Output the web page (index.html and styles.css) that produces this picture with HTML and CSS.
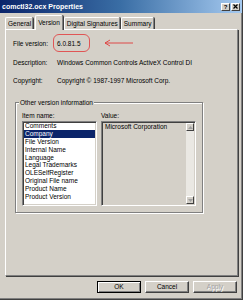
FILE: index.html
```html
<!DOCTYPE html>
<html>
<head>
<meta charset="utf-8">
<link rel="stylesheet" href="styles.css">
</head>
<body>
<div class="window">
  <div class="titlebar">
    <span class="title">comctl32.ocx Properties</span>
    <div class="tbtns">
      <span class="tbtn">?</span>
      <span class="tbtn">
        <svg width="5" height="5" viewBox="0 0 5 5"><path d="M0.5 0.5 L4.5 4.5 M4.5 0.5 L0.5 4.5" stroke="#000" stroke-width="1.2"/></svg>
      </span>
    </div>
  </div>
  <div class="tabs">
    <span class="tab">General</span>
    <span class="tab active">Version</span>
    <span class="tab">Digital Signatures</span>
    <span class="tab">Summary</span>
  </div>
  <div class="panel">
    <div class="info">
      <span class="lbl">File version:</span><span class="val">6.0.81.5</span>
      <span class="lbl">Description:</span><span class="val">Windows Common Controls ActiveX Control DI</span>
      <span class="lbl">Copyright:</span><span class="val">Copyright © 1987-1997 Microsoft Corp.</span>
    </div>
    <div class="mark"></div>
    <svg class="arrow" width="30" height="8" viewBox="0 0 30 8"><path d="M1 4 H29 M1 4 L6 1 M1 4 L6 7" stroke="#e03a3a" stroke-width="0.9" fill="none"/></svg>
    <div class="group">
      <span class="glabel">Other version information</span>
      <div class="gcols">
        <div class="col">
          <span class="clabel">Item name:</span>
          <ul class="list">
            <li>Comments</li>
            <li class="sel">Company</li>
            <li>File Version</li>
            <li>Internal Name</li>
            <li>Language</li>
            <li>Legal Trademarks</li>
            <li>OLESelfRegister</li>
            <li>Original File name</li>
            <li>Product Name</li>
            <li>Product Version</li>
          </ul>
        </div>
        <div class="col">
          <span class="clabel">Value:</span>
          <div class="valuebox">
            <span class="vtext">Microsoft Corporation</span>
            <div class="scroll">
              <span class="sbtn"><svg width="5" height="3" viewBox="0 0 5 3"><path d="M2.5 0 L5 3 H0 Z" fill="#a0a0a0"/></svg></span>
              <span class="sbtn"><svg width="5" height="3" viewBox="0 0 5 3"><path d="M0 0 H5 L2.5 3 Z" fill="#a0a0a0"/></svg></span>
            </div>
          </div>
        </div>
      </div>
    </div>
  </div>
  <div class="buttons">
    <span class="btn default">OK</span>
    <span class="btn">Cancel</span>
    <span class="btn disabled">Apply</span>
  </div>
</div>
</body>
</html>
```
FILE: styles.css
```css
html, body {
  margin: 0;
  padding: 0;
}
body {
  width: 243px;
  height: 300px;
  background: #d4d0c8;
  font-family: "Liberation Sans", Arial, sans-serif;
  font-size: 6.5px;
  color: #000;
  overflow: hidden;
}
.window {
  box-sizing: border-box;
  width: 243px;
  height: 300px;
  border-right: 1px solid #404040;
  border-bottom: 1px solid #404040;
  box-shadow: inset -1px -1px 0 #808080;
  display: flex;
  flex-direction: column;
}
.titlebar {
  height: 13px;
  background: linear-gradient(to right, #0a246a 0%, #3a6ea5 50%, #a6caf0 100%);
  display: flex;
  align-items: center;
  justify-content: space-between;
  padding: 0 2px 0 2px;
}
.title {
  color: #fff;
  font-weight: bold;
  font-size: 7px;
  line-height: 13px;
}
.tbtns {
  display: flex;
  gap: 1px;
}
.tbtn {
  width: 9px;
  height: 8px;
  box-sizing: border-box;
  background: #d4d0c8;
  border-top: 1px solid #fff;
  border-left: 1px solid #fff;
  border-right: 1px solid #404040;
  border-bottom: 1px solid #404040;
  display: flex;
  align-items: center;
  justify-content: center;
  font-weight: bold;
  font-size: 6px;
  line-height: 6px;
}
.tabs {
  display: flex;
  align-items: flex-end;
  padding-left: 5px;
  margin-top: 2px;
  height: 14px;
  position: relative;
  z-index: 2;
}
.tab {
  box-sizing: border-box;
  height: 12px;
  padding: 0 1px 0 2px;
  line-height: 11px;
  border-top: 1px solid #fff;
  border-left: 1px solid #fff;
  border-right: 1px solid #808080;
  border-radius: 2px 2px 0 0;
  box-shadow: 1px 0 0 #404040;
  margin-right: 1px;
  white-space: nowrap;
}
.tab.active {
  height: 15px;
  margin-bottom: -1px;
  margin-left: 1px;
  background: #d4d0c8;
  line-height: 13px;
  padding: 0 2px;
}
.panel {
  box-sizing: border-box;
  margin: 0 5px 0 5px;
  width: 233px;
  height: 247px;
  border-top: 1px solid #fff;
  border-left: 1px solid #fff;
  border-right: 1px solid #808080;
  border-bottom: 1px solid #808080;
  box-shadow: 1px 1px 0 #404040;
  position: relative;
  padding: 10px 7px 0 7px;
}
.info {
  display: grid;
  grid-template-columns: 44px 1fr;
  row-gap: 10.7px;
  line-height: 8px;
}
.mark {
  position: absolute;
  left: 47px;
  top: 4px;
  width: 37px;
  height: 18px;
  border: 1px solid #e05555;
  border-radius: 6px;
  box-sizing: border-box;
}
.arrow {
  position: absolute;
  left: 98px;
  top: 9px;
}
.group {
  position: relative;
  margin: 17px 0 0 2px;
  width: 188px;
  box-sizing: border-box;
  border: 1px solid #808080;
  box-shadow: inset 1px 1px 0 #fff, 1px 1px 0 #fff;
  padding: 9px 6px 6px 6px;
}
.glabel {
  position: absolute;
  top: -4px;
  left: 3px;
  padding: 0 1px;
  background: #d4d0c8;
  line-height: 8px;
}
.gcols {
  display: flex;
  gap: 4px;
}
.col {
  display: flex;
  flex-direction: column;
  gap: 1px;
}
.clabel {
  line-height: 8px;
}
.list {
  list-style: none;
  margin: 0;
  padding: 0;
  width: 75px;
  height: 85px;
  box-sizing: border-box;
  background: #fff;
  border-top: 1px solid #808080;
  border-left: 1px solid #808080;
  border-right: 1px solid #fff;
  border-bottom: 1px solid #fff;
  box-shadow: inset 1px 1px 0 #404040, inset -1px -1px 0 #d4d0c8;
}
.list li {
  line-height: 7.8px;
  height: 7.8px;
  padding-left: 1px;
  margin: 0 1px;
  white-space: nowrap;
}
.list li.sel {
  background: #0a246a;
  color: #fff;
}
.valuebox {
  width: 95px;
  height: 85px;
  box-sizing: border-box;
  border-top: 1px solid #808080;
  border-left: 1px solid #808080;
  border-right: 1px solid #fff;
  border-bottom: 1px solid #fff;
  box-shadow: inset 1px 1px 0 #404040, inset -1px -1px 0 #d4d0c8;
  display: flex;
  justify-content: space-between;
  padding: 1px 1px 1px 3px;
}
.vtext {
  line-height: 7.8px;
}
.scroll {
  width: 8px;
  background: #eae8e3;
  display: flex;
  flex-direction: column;
  justify-content: space-between;
}
.sbtn {
  width: 8px;
  height: 8px;
  box-sizing: border-box;
  background: #d4d0c8;
  border-top: 1px solid #fff;
  border-left: 1px solid #fff;
  border-right: 1px solid #404040;
  border-bottom: 1px solid #404040;
  display: flex;
  align-items: center;
  justify-content: center;
}
.buttons {
  display: flex;
  justify-content: flex-end;
  gap: 4px;
  padding: 5px 5px 0 0;
}
.btn {
  width: 44px;
  height: 12px;
  box-sizing: border-box;
  border-top: 1px solid #fff;
  border-left: 1px solid #fff;
  border-right: 1px solid #404040;
  border-bottom: 1px solid #404040;
  box-shadow: inset -1px -1px 0 #808080;
  text-align: center;
  line-height: 10px;
}
.btn.default {
  border: 1px solid #000;
  box-shadow: inset 1px 1px 0 #fff, inset -1px -1px 0 #808080;
}
.btn.disabled {
  color: #a0a0a0;
  text-shadow: 1px 1px 0 #fff;
}
```
